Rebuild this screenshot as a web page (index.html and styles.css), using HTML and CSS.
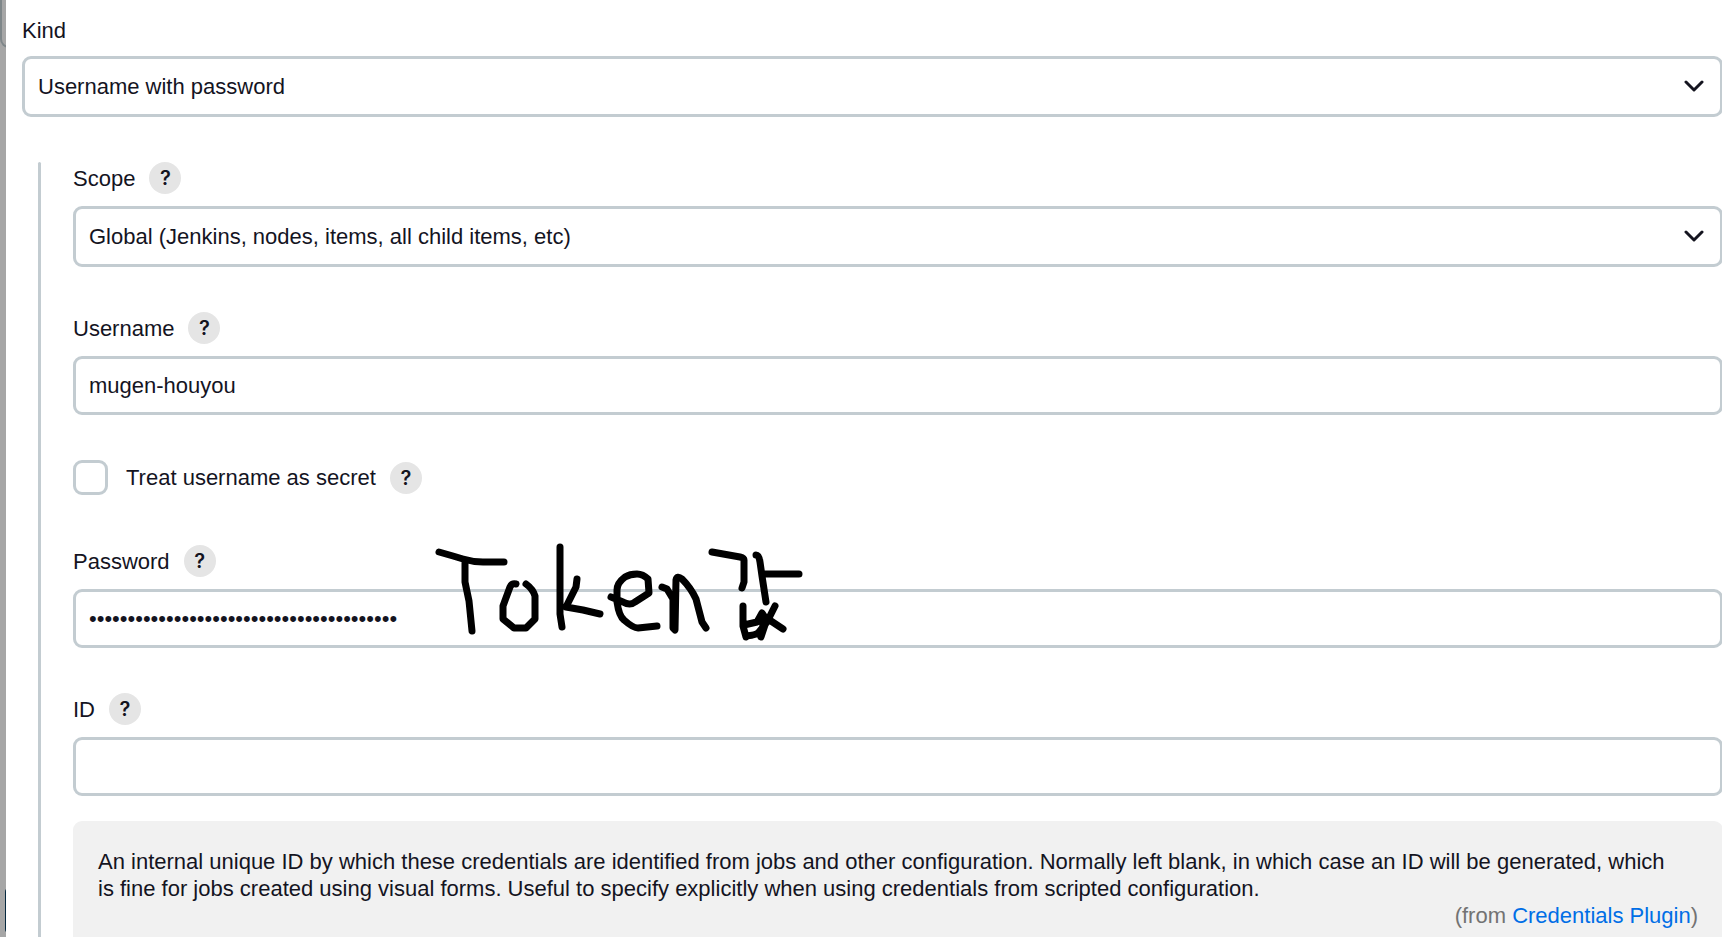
FILE: index.html
```html
<!DOCTYPE html>
<html lang="en">
<head>
<meta charset="utf-8">
<title>Add Credentials</title>
<link rel="stylesheet" href="styles.css">
</head>
<body>
<div class="backdrop" aria-hidden="true">
  <div class="behind-field"></div>
  <div class="behind-button"></div>
</div>
<form class="dialog">
  <div class="field">
    <div class="label-row label-row-kind"><label for="kind">Kind</label></div>
    <div class="select-wrap">
      <select id="kind" class="control select"><option>Username with password</option></select>
      <svg class="chevron" viewBox="0 0 20 12" aria-hidden="true"><path d="M2 2l8 8 8-8"/></svg>
    </div>
  </div>
  <div class="nested">
    <div class="field">
      <div class="label-row"><label for="scope">Scope</label><button type="button" class="help" aria-label="Help for Scope">?</button></div>
      <div class="select-wrap">
        <select id="scope" class="control select"><option>Global (Jenkins, nodes, items, all child items, etc)</option></select>
        <svg class="chevron" viewBox="0 0 20 12" aria-hidden="true"><path d="M2 2l8 8 8-8"/></svg>
      </div>
    </div>
    <div class="field">
      <div class="label-row"><label for="username">Username</label><button type="button" class="help" aria-label="Help for Username">?</button></div>
      <input id="username" class="control input" type="text" value="mugen-houyou">
    </div>
    <div class="check-row">
      <input id="secret" class="checkbox" type="checkbox">
      <label for="secret">Treat username as secret</label><button type="button" class="help" aria-label="Help for Treat username as secret">?</button>
    </div>
    <div class="field password-field">
      <div class="label-row"><label for="password">Password</label><button type="button" class="help" aria-label="Help for Password">?</button></div>
      <input id="password" class="control input" type="password" value="0123456789012345678901234567890123456789">
      <svg class="scribble" viewBox="0 0 378 110" role="img" aria-label="Handwritten note">
        <path d="M10 12L24 16L34 19Q44 22 54 22L75 22M36 20L36 42L40 61L43 91"/>
        <path d="M87 44Q83 43 81 47L74 66L74 79L85 88L97 88L106 79L106 56Q104 49 97 44"/>
        <path d="M131 7L131 74L133 87M148 39L147 47L137 67L154 70L171 74"/>
        <path d="M182 57L194 62Q201 66 206 62L220 53L219 39Q214 34 208 34Q201 34 196 37Q188 43 188 50L188 62Q190 76 195 80Q204 88 209 88L228 86"/>
        <path d="M233 47L238 49L244 59L244 88L246 90L247 40Q248 35 253 39Q262 48 267 59L273 82L277 88"/>
        <path d="M283 12L311 17Q315 18 315 20L315 42L313 48"/>
        <path d="M327 15Q330 15 331 22L333 36L337 62M334 34L370 34"/>
        <path d="M314 66L314 86L317 97M315 85L328 82L333 73L337 79M317 96Q328 95 330 92L338 82L346 66M333 75L334 88M337 82L332 97M339 79L354 89"/>
      </svg>
    </div>
    <div class="field">
      <div class="label-row"><label for="cred-id">ID</label><button type="button" class="help" aria-label="Help for ID">?</button></div>
      <input id="cred-id" class="control input" type="text">
      <div class="help-box">
        <p class="help-text">An internal unique ID by which these credentials are identified from jobs and other configuration. Normally left blank, in which case an ID will be generated, which is fine for jobs created using visual forms. Useful to specify explicitly when using credentials from scripted configuration.</p>
        <p class="help-from">(from <a href="#">Credentials Plugin</a>)</p>
      </div>
    </div>
  </div>
</form>
</body>
</html>
```
FILE: styles.css
```css
* { box-sizing: border-box; }

body {
  margin: 0;
  height: 100vh;
  overflow: hidden;
  display: flex;
  background: #fff;
  color: #14141f;
  font: 22px/27px "Liberation Sans", Arial, sans-serif;
}

.backdrop {
  flex: none;
  width: 6px;
  height: 100vh;
  display: flex;
  flex-direction: column;
  justify-content: space-between;
  overflow: hidden;
  background: #a6a6a6;
}

.behind-field {
  width: 60px;
  height: 48px;
  border: 2px solid #7e8689;
  border-top: 0;
  border-radius: 0 0 0 9px;
}

.behind-button {
  width: 60px;
  height: 45px;
  margin: 0 0 4px 5px;
  border-radius: 4px;
  background: #06283f;
}

.dialog {
  flex: 1;
  min-width: 0;
  margin-right: -1px;
  padding: 14px 0 0 16px;
}

.label-row {
  display: flex;
  align-items: center;
  gap: 14px;
  height: 32px;
  margin-bottom: 12px;
}

.label-row-kind { margin-bottom: 10px; }

.control {
  display: block;
  width: 100%;
  height: 59px;
  margin: 0;
  padding: 0 13px;
  border: 3px solid #c3ccd1;
  border-radius: 9px;
  background: #fff;
  color: inherit;
  font: inherit;
  outline: 0;
}

.select {
  height: 61px;
  appearance: none;
}

.select-wrap { position: relative; }

.chevron {
  position: absolute;
  top: 24px;
  right: 19px;
  width: 20px;
  height: 12px;
  pointer-events: none;
}

.chevron path {
  fill: none;
  stroke: #14141f;
  stroke-width: 3;
  stroke-linecap: round;
  stroke-linejoin: round;
}

.nested {
  display: flex;
  flex-direction: column;
  gap: 45px;
  position: relative;
  margin: 45px 0 0 16px;
  padding-left: 35px;
}

.nested::before {
  content: "";
  position: absolute;
  inset: 0 auto 0 0;
  width: 3px;
  border-radius: 2px;
  background: #c3ccd1;
}

.help {
  width: 32px;
  height: 32px;
  padding: 0;
  border: 0;
  border-radius: 50%;
  background: #e5e5e5;
  color: inherit;
  font: 600 20px/32px Inter, "Liberation Sans", sans-serif;
  text-align: center;
}

.check-row {
  display: flex;
  align-items: center;
  gap: 14px;
  height: 35px;
  margin-bottom: 5px;
}

.checkbox {
  appearance: none;
  width: 35px;
  height: 35px;
  margin: 0 4px 0 0;
  border: 3px solid #c3ccd1;
  border-radius: 9px;
  background: #fff;
}

.password-field { position: relative; }

.scribble {
  position: absolute;
  top: -5px;
  left: 356px;
  width: 378px;
  height: 110px;
  pointer-events: none;
}

.scribble path {
  fill: none;
  stroke: #000;
  stroke-width: 7;
  stroke-linecap: round;
  stroke-linejoin: round;
}

.help-box {
  margin-top: 25px;
  padding: 27px 25px;
  border-radius: 9px;
  background: #f1f1f1;
}

.help-text,
.help-from { margin: 0; }

.help-text { padding-right: 24px; }

.help-from {
  color: #737373;
  text-align: right;
}

.help-from a {
  color: #006ee6;
  text-decoration: none;
}
```
